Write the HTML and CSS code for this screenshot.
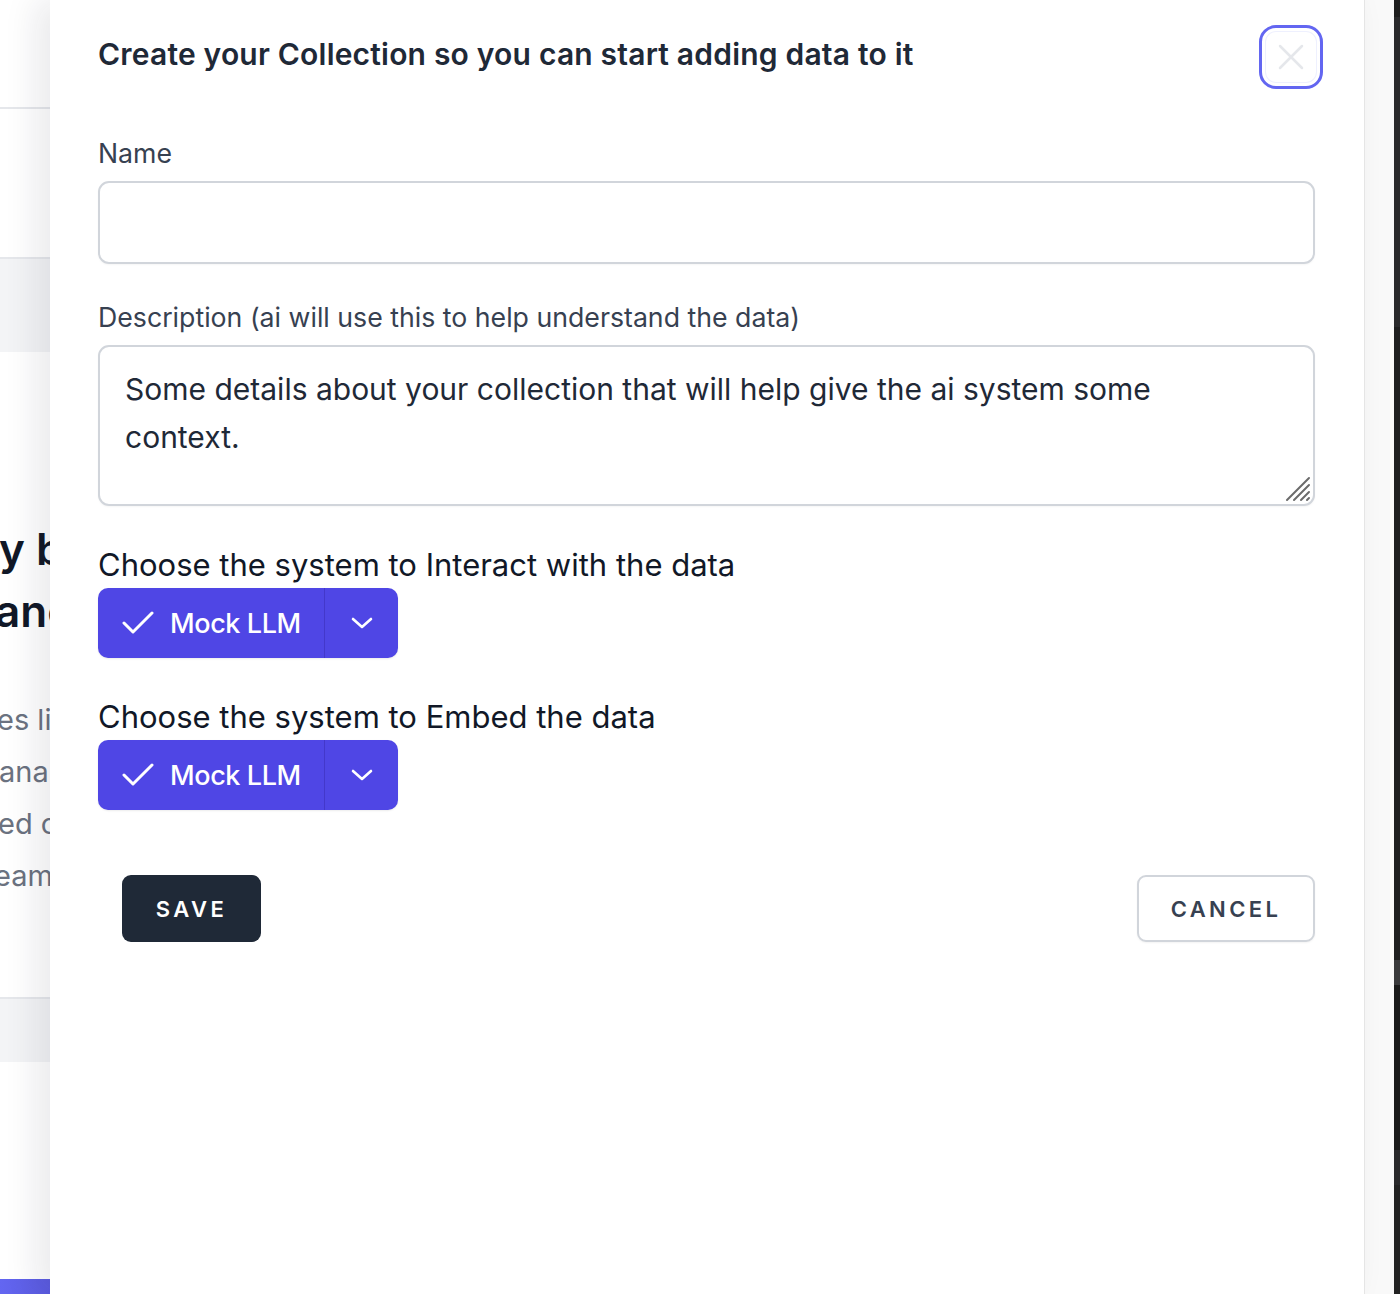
FILE: index.html
```html
<!DOCTYPE html>
<html lang="en">
<head>
<meta charset="utf-8">
<title>Create Collection</title>
<link rel="stylesheet" href="styles.css">
</head>
<body>
<div class="screen">
  <aside class="behind">
    <div class="bg-top"></div>
    <div class="bg-mid"></div>
    <div class="bg-band"></div>
    <div class="bg-hero">
      <div class="hero-title"><span class="l1">y b</span><span class="l2">anc</span></div>
      <div class="hero-text">
        <span class="t1">es lil</span>
        <span class="t2">ana</span>
        <span class="t3">ed c</span>
        <span class="t4">eam</span>
      </div>
    </div>
    <div class="bg-band2"></div>
    <div class="bg-low"></div>
    <div class="bg-purple"></div>
  </aside>

  <main class="modal">
    <header class="modal-head">
      <h1 class="modal-title">Create your Collection so you can start adding data to it</h1>
      <button class="close-btn" aria-label="Close">
        <svg width="30" height="30" viewBox="0 0 30 30"><path d="M4 4 L26 26 M26 4 L4 26" stroke="#e5e7eb" stroke-width="2.5" stroke-linecap="round" fill="none"/></svg>
      </button>
    </header>

    <label class="field-label" for="name">Name</label>
    <input id="name" class="text-input" type="text">

    <label class="field-label desc-label" for="desc">Description (ai will use this to help understand the data)</label>
    <div class="area-wrap">
      <textarea id="desc" class="text-area">Some details about your collection that will help give the ai system some context.</textarea>
      <svg class="grip" width="26" height="26" viewBox="0 0 26 26"><path d="M2 24 L24 2 M9 24 L24 9 M16 24 L24 16 M22 24 L24 22" stroke="#6b6b6b" stroke-width="2" stroke-linecap="round" fill="none"/></svg>
    </div>

    <div class="choice">
      <div class="choice-label">Choose the system to Interact with the data</div>
      <div class="split-btn">
        <span class="split-main">
          <svg width="32" height="26" viewBox="0 0 32 26"><path d="M2 13 L11 22 L30 3" stroke="#fff" stroke-width="3" fill="none" stroke-linecap="round" stroke-linejoin="round"/></svg>
          Mock LLM
        </span>
        <span class="split-arrow">
          <svg width="22" height="14" viewBox="0 0 22 14"><path d="M2 3 L11 11 L20 3" stroke="#fff" stroke-width="2.6" fill="none" stroke-linecap="round" stroke-linejoin="round"/></svg>
        </span>
      </div>
    </div>

    <div class="choice">
      <div class="choice-label">Choose the system to Embed the data</div>
      <div class="split-btn">
        <span class="split-main">
          <svg width="32" height="26" viewBox="0 0 32 26"><path d="M2 13 L11 22 L30 3" stroke="#fff" stroke-width="3" fill="none" stroke-linecap="round" stroke-linejoin="round"/></svg>
          Mock LLM
        </span>
        <span class="split-arrow">
          <svg width="22" height="14" viewBox="0 0 22 14"><path d="M2 3 L11 11 L20 3" stroke="#fff" stroke-width="2.6" fill="none" stroke-linecap="round" stroke-linejoin="round"/></svg>
        </span>
      </div>
    </div>

    <footer class="actions">
      <button class="btn-save">SAVE</button>
      <button class="btn-cancel">CANCEL</button>
    </footer>
  </main>

  <div class="side-light"></div>
  <div class="side-dark">
    <div class="d1"></div><div class="d2"></div><div class="d3"></div><div class="d4"></div><div class="d5"></div><div class="d6"></div><div class="d7"></div>
  </div>
</div>
</body>
</html>
```

FILE: styles.css
```css
* { box-sizing: border-box; }
html, body { margin: 0; padding: 0; }
body {
  font-family: "Inter", "Noto Sans", sans-serif;
  background: #fff;
  width: 1400px;
  height: 1294px;
  overflow: hidden;
}
.screen {
  display: flex;
  height: 1294px;
}

/* page behind the modal */
.behind {
  width: 50px;
  flex: none;
  display: flex;
  flex-direction: column;
  overflow: hidden;
  background: #fff;
}
.bg-top { height: 109px; background: #fff; border-bottom: 2px solid #e5e7eb; flex: none; }
.bg-mid { height: 148px; background: #fff; flex: none; }
.bg-band { height: 95px; background: #f3f4f6; border-top: 2px solid #e5e7eb; flex: none; }
.bg-hero { height: 645px; flex: none; position: relative; }
.hero-title {
  display: flex;
  flex-direction: column;
  margin-top: 166px;
  font-size: 44px;
  font-weight: 600;
  line-height: 62px;
  color: #111827;
  white-space: nowrap;
}
.hero-title .l1 { margin-left: -1px; }
.hero-title .l2 { margin-left: -5px; }
.hero-text {
  display: flex;
  flex-direction: column;
  margin-top: 52px;
  font-size: 29px;
  line-height: 52px;
  color: #6b7280;
  white-space: nowrap;
}
.hero-text .t1 { margin-left: -3px; }
.hero-text .t2 { margin-left: -1px; }
.hero-text .t3 { margin-left: -2px; }
.hero-text .t4 { margin-left: -6px; }
.bg-band2 { height: 65px; background: #f3f4f6; border-top: 2px solid #e5e7eb; flex: none; }
.bg-low { height: 217px; flex: none; }
.bg-purple { flex: 1; background: linear-gradient(90deg, #6366f1, #5b5bdf); }

/* modal */
.modal {
  position: relative;
  z-index: 2;
  width: 1315px;
  flex: none;
  background: #fff;
  border-right: 1px solid #e5e5e5;
  box-shadow: -14px 0 32px rgba(17, 24, 39, 0.09);
  padding: 25px 49px 0 48px;
  display: flex;
  flex-direction: column;
}
.modal-head {
  display: flex;
  justify-content: space-between;
  align-items: flex-start;
  margin-right: -8px;
}
.modal-title {
  margin: 12px 0 0;
  font-size: 30px;
  font-weight: 600;
  line-height: 34px;
  color: #1f2937;
  letter-spacing: 0.2px;
}
.close-btn {
  width: 64px;
  height: 64px;
  border: 3px solid #6366f1;
  border-radius: 17px;
  background: #fff;
  display: flex;
  align-items: center;
  justify-content: center;
  padding: 0;
  box-shadow: inset 0 0 0 3px #fff, inset 0 0 0 4px #eef0fe;
}

.field-label {
  display: block;
  font-size: 26.7px;
  line-height: 32px;
  color: #374151;
  margin-top: 48px;
}
.desc-label { margin-top: 37px; }
.text-input {
  display: block;
  width: 100%;
  height: 83px;
  margin-top: 12px;
  border: 2px solid #d1d5db;
  border-radius: 11px;
  background: #fff;
  font: inherit;
  box-shadow: 0 1px 2px rgba(0,0,0,0.04);
}
.area-wrap {
  position: relative;
  margin-top: 12px;
}
.text-area {
  display: block;
  width: 100%;
  height: 161px;
  border: 2px solid #d1d5db;
  border-radius: 11px;
  padding: 18px 80px 0 25px;
  font-family: "Inter", "Noto Sans", sans-serif;
  font-size: 30px;
  line-height: 48px;
  color: #1f2937;
  resize: none;
  box-shadow: 0 1px 2px rgba(0,0,0,0.04);
}
.grip {
  position: absolute;
  right: 4px;
  bottom: 4px;
}

.choice { margin-top: 40px; }
.choice-label {
  font-size: 31px;
  line-height: 38px;
  color: #111827;
}
.split-btn {
  margin-top: 4px;
  display: inline-flex;
  height: 70px;
  border-radius: 10px;
  overflow: hidden;
  background: #4f46e5;
  color: #fff;
  box-shadow: 0 1px 2px rgba(0,0,0,0.08);
}
.split-main {
  display: flex;
  align-items: center;
  gap: 16px;
  width: 227px;
  padding-left: 24px;
  font-size: 27px;
  font-weight: 500;
  letter-spacing: -0.4px;
  border-right: 1px solid #4338ca;
}
.split-arrow {
  width: 73px;
  display: flex;
  align-items: center;
  justify-content: center;
}

.actions {
  margin-top: 65px;
  display: flex;
  justify-content: space-between;
  align-items: center;
  padding-left: 24px;
}
.btn-save, .btn-cancel {
  height: 67px;
  border-radius: 9px;
  font-family: "Inter", "Noto Sans", sans-serif;
  font-size: 22px;
  font-weight: 600;
  letter-spacing: 3.4px;
}
.btn-save {
  width: 139px;
  background: #1f2937;
  color: #fff;
  border: none;
}
.btn-cancel {
  width: 178px;
  background: #fff;
  color: #374151;
  border: 2px solid #d1d5db;
  box-shadow: 0 1px 2px rgba(0,0,0,0.05);
}

/* right edge */
.side-light { width: 29px; flex: none; background: #f9f9f9; }
.side-dark { width: 6px; flex: none; display: flex; flex-direction: column; }
.side-dark .d1 { height: 17px; background: #1e1e1e; }
.side-dark .d2 { height: 310px; background: #2a2a2c; }
.side-dark .d3 { height: 633px; background: #1f1f20; }
.side-dark .d4 { height: 25px; background: #3a3a3c; }
.side-dark .d5 { height: 165px; background: #1b1b1b; }
.side-dark .d6 { height: 35px; background: #2a2a2c; }
.side-dark .d7 { flex: 1; background: #232323; }
```
